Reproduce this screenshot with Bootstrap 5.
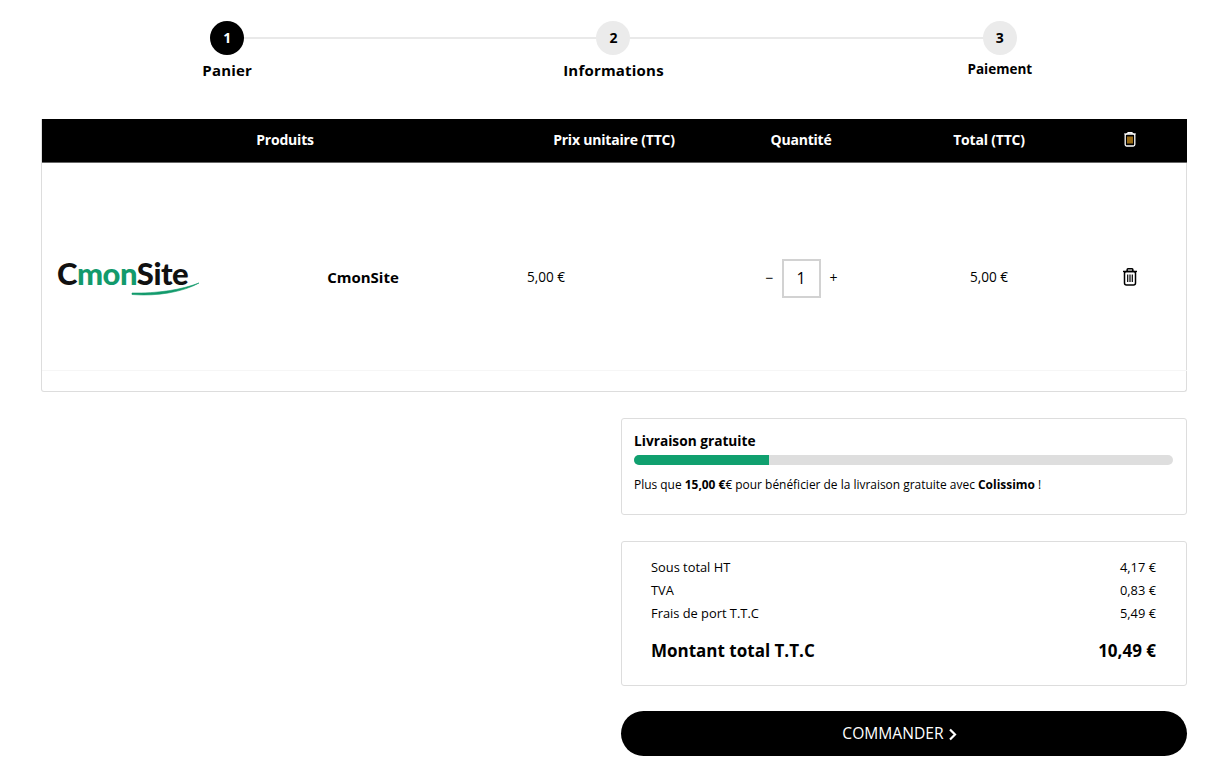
<!DOCTYPE html>
<html lang="fr"><head><meta charset="utf-8"><title>Panier</title>
<link href="https://cdn.jsdelivr.net/npm/bootstrap@5.3.0/dist/css/bootstrap.min.css" rel="stylesheet">
<style>
html,body{height:783px;overflow:hidden}
body{font-family:"Open Sans",sans-serif;color:#000;background:#fff;font-size:13px}
.page-wrap{width:1145px;margin-left:42px}
.stepper{width:1159px;margin-left:-8px;height:119px;padding-top:21px}
.step-col{width:33.333%;position:relative;text-align:center}
.step-col:not(:last-child)::after{content:"";position:absolute;top:16px;left:50%;width:100%;height:2px;background:#e9e9e9}
.step-dot{width:34px;height:34px;border-radius:50%;background:#ebebeb;font-weight:700;font-size:14px;line-height:34px;margin:0 auto;position:relative;z-index:1}
.step-dot.on{background:#000;color:#fff}
.step-name{font-weight:700;font-size:15px;line-height:20px;margin-top:5px;letter-spacing:.2px}
.step-name.sm{font-size:13.5px;margin-top:4px;letter-spacing:0}
.cart-box{border:1px solid #ddd;border-top:0;border-radius:0 0 3px 3px;height:273px;margin-left:-1px;width:1146px}
.cart-tbl{table-layout:fixed;width:1145px}
.cart-tbl th{background:#000;color:#fff;height:43px;text-align:center;font-size:14px;font-weight:700;padding:0 0 2px;border-bottom:1px solid #666;letter-spacing:-.2px}
.cart-tbl th svg{display:block;margin:0 auto;position:relative;left:-2px}
.cart-tbl td{height:208px;padding:22px 0 0;vertical-align:middle;border-bottom:1px solid #f6f6f6;text-align:center;font-size:13.6px}
.cart-tbl td.logo-cell{text-align:left;padding-left:15px}
.cart-tbl td.end-cell{padding:20px 4px 0 0}
.cart-tbl td.name-cell{font-size:15px;font-weight:700}
.cart-tbl td.price-cell{text-align:left;padding-left:0}
.price-txt{margin-left:-1px}
.logo-txt{font-family:"Lato",sans-serif;font-weight:900;font-size:31px;line-height:32px;letter-spacing:-.5px;color:#111;white-space:nowrap}
.logo-txt b{color:#129a6c;font-weight:900}
.logo-swoosh{display:block;width:142px;height:15px;margin-top:-7px}
.qty-box{width:39px;height:39px;border:2px solid #d2d2d2;font-size:16px;line-height:35px;text-align:center;margin-top:2px}
.qty-sign{font-size:14px;width:10px}
.side-wrap{width:566px}
.info-box{border:1px solid #ddd;border-radius:3px}
.free-box{height:97px;margin-top:26px;padding:12px 13px 12px 12px}
.free-title{font-weight:700;font-size:13.7px;line-height:20px}
.free-bar{height:10px;background:#dedede;border-radius:5px;margin-top:4px;overflow:hidden}
.free-fill{height:100%;background:#10a06f}
.free-txt{font-size:11.95px;line-height:16px;margin-top:12px}
.sum-box{height:145px;margin-top:26px;padding:14px 30px 0 29px}
.sum-line{line-height:23px;font-size:12.85px}
.sum-total{font-weight:700;font-size:17px;line-height:24px;margin-top:14px}
.order-btn{display:block;width:100%;height:45px;margin-top:25px;border-radius:23px;background:#000;color:#fff;border:0;font-size:15.6px;line-height:45px;padding:0 9px 0 0}
.order-btn:hover{background:#000;color:#fff}
</style></head>
<body>
<div class="page-wrap">
  <div class="stepper d-flex">
    <div class="step-col"><div class="step-dot on">1</div><div class="step-name">Panier</div></div>
    <div class="step-col"><div class="step-dot">2</div><div class="step-name">Informations</div></div>
    <div class="step-col"><div class="step-dot">3</div><div class="step-name sm">Paiement</div></div>
  </div>
  <div class="cart-box">
    <table class="cart-tbl">
      <colgroup><col style="width:156px"><col style="width:330px"><col style="width:172px"><col style="width:202px"><col style="width:174px"><col style="width:111px"></colgroup>
      <thead><tr><th colspan="2">Produits</th><th>Prix unitaire (TTC)</th><th>Quantité</th><th>Total (TTC)</th>
        <th><svg width="14" height="16" viewBox="0 0 14 16" aria-label="Vider"><path d="M1 3h12M5 3V1.500h4V3" fill="none" stroke="#fff" stroke-width="1.200"/><rect x="2.200" y="3" width="9.600" height="12" rx="1.500" fill="#000" stroke="#fff" stroke-width="1.300"/><path d="M5 5.500v7M7 5.500v7M9 5.500v7" stroke="#e9a21f" stroke-width="1.300"/></svg></th></tr></thead>
      <tbody><tr>
        <td class="logo-cell"><div class="logo-txt">C<b>mon</b>Site</div>
          <svg class="logo-swoosh" viewBox="0 0 142 15"><path d="M75 12.500C100 14.500 126 10 142 1 124 8 100 11.500 75 11z" fill="#129a6c" stroke="#129a6c" stroke-width=".6"/></svg></td>
        <td class="name-cell">CmonSite</td>
        <td class="price-cell"><span class="price-txt">5,00 €</span></td>
        <td><div class="d-flex justify-content-center align-items-center gap-2">
          <span class="qty-sign text-end">−</span><div class="qty-box">1</div><span class="qty-sign">+</span></div></td>
        <td>5,00 €</td>
        <td class="end-cell"><svg width="16" height="18" viewBox="0 0 16 18" aria-label="Supprimer"><path d="M1 3.500h14M5.200 3.500V1.500a.7.7 0 0 1 .7-.7h4.200a.7.7 0 0 1 .7.7v2" fill="none" stroke="#000" stroke-width="1.500"/><rect x="2.500" y="3.500" width="11" height="13.500" rx="2" fill="none" stroke="#000" stroke-width="1.500"/><path d="M5.700 6.500v7.500M8 6.500v7.500M10.300 6.500v7.500" stroke="#000" stroke-width="1.200"/></svg></td>
      </tr></tbody>
    </table>
  </div>
  <div class="d-flex justify-content-end">
    <div class="side-wrap">
      <div class="info-box free-box">
        <div class="free-title">Livraison gratuite</div>
        <div class="free-bar"><div class="free-fill" style="width:25%"></div></div>
        <div class="free-txt">Plus que <strong>15,00 €</strong>€ pour bénéficier de la livraison gratuite avec <strong>Colissimo</strong> !</div>
      </div>
      <div class="info-box sum-box">
        <div class="sum-line d-flex justify-content-between"><span>Sous total HT</span><span>4,17 €</span></div>
        <div class="sum-line d-flex justify-content-between"><span>TVA</span><span>0,83 €</span></div>
        <div class="sum-line d-flex justify-content-between"><span>Frais de port T.T.C</span><span>5,49 €</span></div>
        <div class="sum-total d-flex justify-content-between"><span>Montant total T.T.C</span><span>10,49 €</span></div>
      </div>
      <a href="#" class="btn order-btn">COMMANDER <svg width="9" height="13" viewBox="0 0 9 13" aria-hidden="true"><path d="M2 1.500 7 6.500 2 11.500" fill="none" stroke="#fff" stroke-width="2.200"/></svg></a>
    </div>
  </div>
</div>
</body></html>
